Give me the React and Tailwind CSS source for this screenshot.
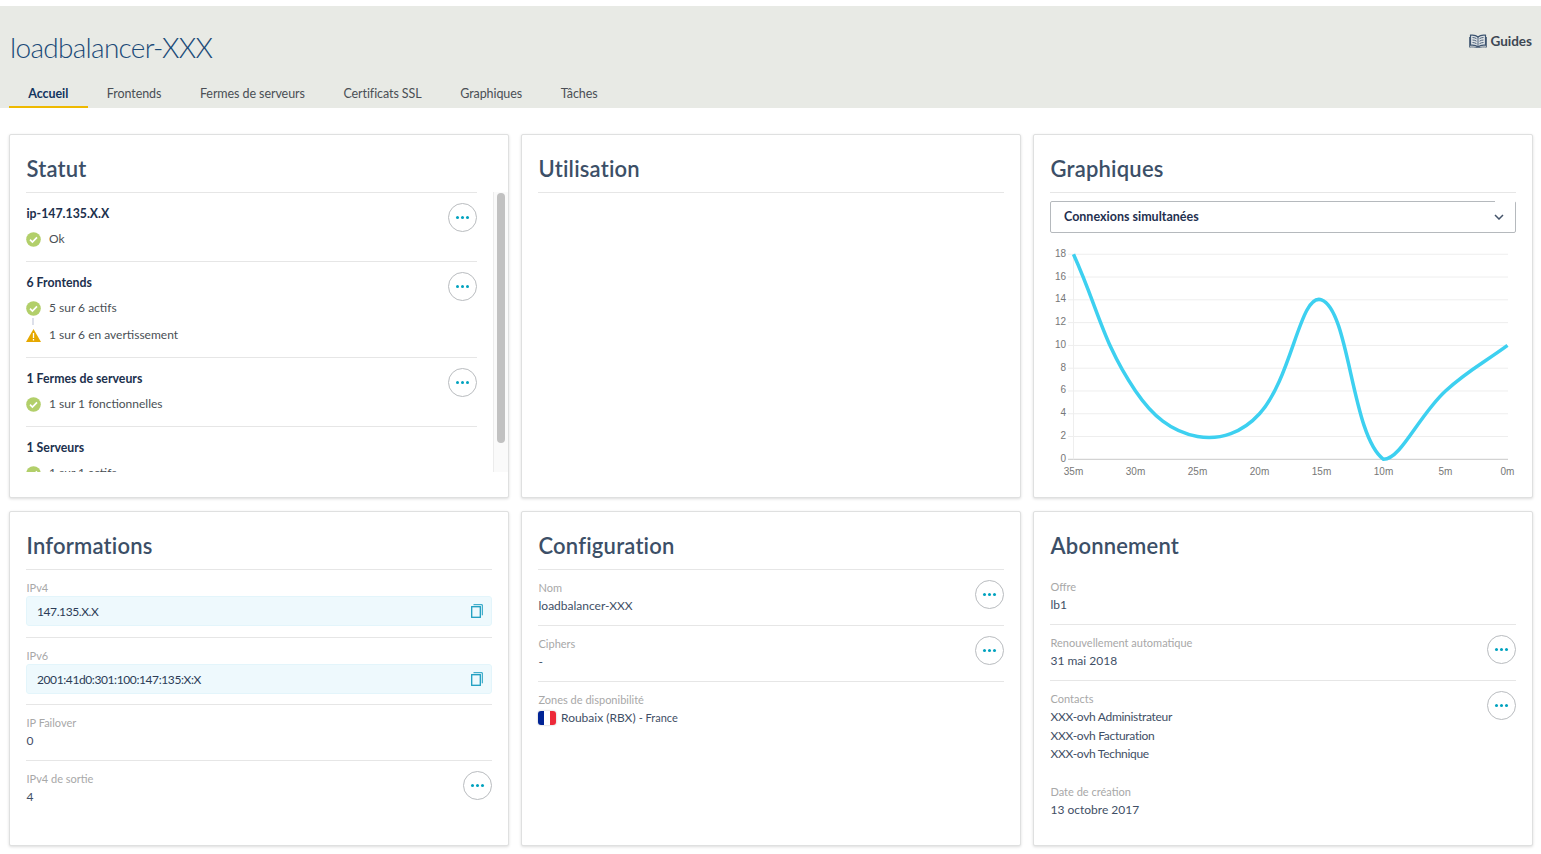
import React from "react"

const FONT = "font-['Lato','Noto_Sans',sans-serif]"

const TABS = ["Accueil", "Frontends", "Fermes de serveurs", "Certificats SSL", "Graphiques", "Tâches"]

// Valeurs du graphique, de 35m à 0m
const CHART_DATA = [18, 6, 2, 4, 14, 0, 6, 10]
const X_LABELS = ["35m", "30m", "25m", "20m", "15m", "10m", "5m", "0m"]
const Y_LABELS = [18, 16, 14, 12, 10, 8, 6, 4, 2, 0]

const chartX = (i) => 23.5 + i * 62
const chartY = (v) => 219.3 - v * 11.39

// Courbe de Bézier avec une tension de 0.4
const buildCurve = (values) => {
  const pts = values.map((v, i) => [chartX(i), chartY(v)])
  const dist = (a, b) => Math.hypot(a[0] - b[0], a[1] - b[1])
  const ctrl = pts.map((cur, i) => {
    const prev = pts[i - 1] || cur
    const next = pts[i + 1] || cur
    const d01 = dist(prev, cur)
    const d12 = dist(cur, next)
    const total = d01 + d12 || 1
    const fa = (0.4 * d01) / total
    const fb = (0.4 * d12) / total
    return {
      before: [cur[0] - fa * (next[0] - prev[0]), cur[1] - fa * (next[1] - prev[1])],
      after: [cur[0] + fb * (next[0] - prev[0]), cur[1] + fb * (next[1] - prev[1])],
    }
  })
  let d = `M${pts[0][0]} ${pts[0][1]}`
  for (let i = 1; i < pts.length; i++) {
    const c1 = ctrl[i - 1].after
    const c2 = ctrl[i].before
    d += ` C${c1[0].toFixed(1)} ${Math.min(c1[1], 219.3).toFixed(1)} ${c2[0].toFixed(1)} ${Math.min(c2[1], 219.3).toFixed(1)} ${pts[i][0]} ${pts[i][1]}`
  }
  return d
}

const Dots = () => (
  <button className="flex size-[29px] shrink-0 items-center justify-center gap-[2px] rounded-full border border-[#b9bcbf] bg-white">
    <span className="size-[3px] rounded-full bg-[#00a2bf]" />
    <span className="size-[3px] rounded-full bg-[#00a2bf]" />
    <span className="size-[3px] rounded-full bg-[#00a2bf]" />
  </button>
)

const CheckIcon = () => (
  <svg width="15" height="15" viewBox="0 0 15 15" className="shrink-0">
    <circle cx="7.5" cy="7.5" r="7.3" fill="#b2cf6a" />
    <path d="M4 7.700l2.400 2.300 4.600-4.700" fill="none" stroke="#fff" strokeWidth="1.700" />
  </svg>
)

const WarnIcon = () => (
  <svg width="15" height="13" viewBox="0 0 15 13" className="shrink-0">
    <path d="M7.5 0L15 13H0z" fill="#e6a800" />
    <path d="M7.5 4v5M7.5 10v1.5" stroke="#fff" strokeWidth="1.3" />
  </svg>
)

const CopyIcon = () => (
  <svg width="12" height="14" viewBox="0 0 12 14" className="shrink-0">
    <rect x="0.7" y="2.7" width="8.6" height="10.6" fill="none" stroke="#1b9dc0" strokeWidth="1.3" />
    <path d="M2.5 0.7h8.8v10.6" fill="none" stroke="#1b9dc0" strokeWidth="1" />
  </svg>
)

const BookIcon = () => (
  <svg width="18" height="14" viewBox="0 0 18 14" className="shrink-0">
    <path d="M9 3C7 1.200 4 .8 1.500 1.200v10C4 10.800 7 11.200 9 13c2-1.800 5-2.200 7.500-1.800v-10C14 .8 11 1.200 9 3z" fill="#dfe4e6" stroke="#3d5470" strokeWidth="1.200" />
    <path d="M9 3v10M3.500 3.500c1.500 0 3 .5 4 1.200M3.500 6c1.500 0 3 .5 4 1.200M3.500 8.500c1.500 0 3 .5 4 1.200M14.500 3.500c-1.500 0-3 .5-4 1.200M14.500 6c-1.500 0-3 .5-4 1.200M14.500 8.500c-1.500 0-3 .5-4 1.200" fill="none" stroke="#3d5470" strokeWidth="0.900" />
    <path d="M.5 3v10.200c2.500-.5 6-.2 8.500.8 2.500-1 6-1.300 8.500-.8V3" fill="none" stroke="#3d5470" strokeWidth="0.800" />
  </svg>
)

const Card = ({ title, children, noDivider }) => (
  <section className="flex min-h-0 flex-col overflow-hidden rounded-[2px] border border-[#dfe0e0] bg-white px-4 shadow-[0_1px_3px_rgba(0,0,0,0.14)]">
    <h2 className={`pb-[9px] pl-[0.5px] pt-5 text-[22px] font-semibold leading-7 tracking-[0.2px] text-[#3c4f67] ${noDivider ? "" : "border-b border-[#e6e6e6]"}`}>{title}</h2>
    {children}
  </section>
)

const Label = ({ children }) => <div className="text-[11px] leading-4 text-[#a8a8a8]">{children}</div>

const Value = ({ children }) => <div className="mt-px text-[12px] leading-[18px] text-[#3f4f66]">{children}</div>

const Field = ({ label, value, action, pb = "pb-[10px]", first }) => (
  <div className={`flex items-start justify-between pt-[10px] ${pb} ${first ? "" : "border-t border-[#e6e6e6]"}`}>
    <div className="pl-[0.5px]">
      <Label>{label}</Label>
      {value}
    </div>
    {action && <Dots />}
  </div>
)

const CopyField = ({ label, value, pb }) => (
  <div className={`border-t border-[#e6e6e6] pt-[10px] ${pb}`}>
    <div className="pl-[0.5px]">
      <Label>{label}</Label>
    </div>
    <div className="flex h-[30px] items-center justify-between rounded-[3px] border border-[#e3f5fb] bg-[#eef9fd] pl-[10px] pr-[8px] text-[12px] tracking-[-0.4px] text-[#2c3c57]">
      <span className="pt-px">{value}</span>
      <CopyIcon />
    </div>
  </div>
)

const StatusLine = ({ warn, children }) => (
  <div className="flex h-[18px] items-center gap-2 text-[12px] text-[#4a4f55]">
    {warn ? <WarnIcon /> : <CheckIcon />}
    <span>{children}</span>
  </div>
)

const StatusBlock = ({ name, action = true, children }) => (
  <div className="flex items-start justify-between border-t border-[#e6e6e6] pb-[13px] pt-[10px]">
    <div>
      <div className="mb-[6px] mt-px pl-[0.5px] text-[12.300px] font-bold leading-[20px] text-[#20304d]">{name}</div>
      {children}
    </div>
    {action && <Dots />}
  </div>
)

const Chart = () => (
  <svg width="466" height="240" viewBox="0 0 466 240" className="mt-[7px] block">
    {Y_LABELS.map((v) => (
      <g key={v}>
        <line x1="18" x2="458" y1={chartY(v)} y2={chartY(v)} stroke={v === 0 ? "#c9c9c9" : "#eeeeee"} />
        <text x="16" y={chartY(v) + 2.500} textAnchor="end" fontSize="10" fontFamily="Liberation Sans, sans-serif" fill="#777">{v}</text>
      </g>
    ))}
    <line x1="23.500" x2="23.500" y1="14" y2="219.300" stroke="#eeeeee" />
    {X_LABELS.map((label, i) => (
      <text key={label} x={chartX(i)} y="235" textAnchor="middle" fontSize="10" fontFamily="Liberation Sans, sans-serif" fill="#777">{label}</text>
    ))}
    <path d={buildCurve(CHART_DATA)} fill="none" stroke="#3dd0f0" strokeWidth="3.500" />
  </svg>
)

export default function App() {
  return (
    <div className={`${FONT} min-h-[854px] bg-white pt-[6px]`}>
      {/* En-tête */}
      <header className="h-[102px] bg-[#e8eae5] pl-[9px]">
        <div className="flex items-start justify-between pr-[9px]">
          <h1 className="pl-px pt-[22px] text-[28px] font-light leading-[38px] tracking-[-0.7px] text-[#1b4a78]">loadbalancer-XXX</h1>
          <a className="mt-[26px] flex items-center gap-[3px] text-[13.500px] font-bold leading-[18px] text-[#3d4753]">
            <BookIcon />
            Guides
          </a>
        </div>
        <nav className="mt-[10px] flex">
          {TABS.map((tab, i) => (
            <a key={tab} className={`h-[32px] px-[19.300px] pt-[9px] text-[12.500px] leading-[18px] tracking-[-0.08px] ${i === 0 ? "border-b-2 border-[#eeb900] font-bold text-[#12355f]" : "text-[#4a4f55]"}`}>
              {tab}
            </a>
          ))}
        </nav>
      </header>

      {/* Grille des cartes */}
      <main className="ml-[9px] mt-[26px] grid w-[1524px] grid-cols-3 grid-rows-[364px_335px] gap-x-3 gap-y-[13px]">
        <Card title="Statut" noDivider>
          <div className="-mr-4 flex h-[280px]">
            <div className="w-[451px] overflow-hidden">
              <StatusBlock name="ip-147.135.X.X">
                <StatusLine>Ok</StatusLine>
              </StatusBlock>
              <StatusBlock name="6 Frontends">
                <StatusLine>5 sur 6 actifs</StatusLine>
                <div className="ml-[6px] mt-px h-[7px] w-[2px] bg-[#dde0ea]" />
                <div className="mt-px">
                  <StatusLine warn>1 sur 6 en avertissement</StatusLine>
                </div>
              </StatusBlock>
              <StatusBlock name="1 Fermes de serveurs">
                <StatusLine>1 sur 1 fonctionnelles</StatusLine>
              </StatusBlock>
              <StatusBlock name="1 Serveurs" action={false}>
                <StatusLine>1 sur 1 actifs</StatusLine>
              </StatusBlock>
            </div>
            <div className="ml-4 w-[15px] border-l border-[#ececec] bg-[#fafafa] pl-[3px] pt-px">
              <div className="h-[250px] w-2 rounded-full bg-[#c1c1c1]" />
            </div>
          </div>
        </Card>

        <Card title="Utilisation" />

        <Card title="Graphiques">
          <div className="relative mt-2 flex h-[32px] items-center justify-between rounded-[2px] border border-[#b5b9bd] pl-[13px] pr-[11px] text-[12.500px] font-bold text-[#1f3050]">
            <span className="pt-px">Connexions simultanées</span>
            <svg width="10" height="6" viewBox="0 0 10 6">
              <path d="M1 1l4 4 4-4" fill="none" stroke="#44546a" strokeWidth="1.500" />
            </svg>
            <span className="absolute -top-px right-0 h-[2px] w-5 bg-white" />
          </div>
          <Chart />
        </Card>

        <Card title="Informations" noDivider>
          <CopyField label="IPv4" value="147.135.X.X" pb="pb-[11px]" />
          <CopyField label="IPv6" value="2001:41d0:301:100:147:135:X:X" pb="pb-[10px]" />
          <Field label="IP Failover" value={<Value>0</Value>} />
          <Field label="IPv4 de sortie" value={<Value>4</Value>} action />
        </Card>

        <Card title="Configuration">
          <Field first label="Nom" value={<Value>loadbalancer-XXX</Value>} action />
          <Field label="Ciphers" value={<Value>-</Value>} action />
          <Field
            label="Zones de disponibilité"
            value={
              <div className="mt-px flex items-center gap-[5px] text-[12px] leading-[18px] text-[#3f4f66]">
                <span className="-ml-[0.5px] flex h-[14px] w-[18px] overflow-hidden rounded-[3px] shadow-[0_0_2px_rgba(0,0,0,0.3)]">
                  <span className="flex-1 bg-[#002395]" />
                  <span className="flex-1 bg-white" />
                  <span className="flex-1 bg-[#ed2939]" />
                </span>
                <span>Roubaix (RBX) <span className="text-[11px]">- France</span></span>
              </div>
            }
          />
        </Card>

        <Card title="Abonnement" noDivider>
          <Field first label="Offre" value={<Value>lb1</Value>} />
          <Field label="Renouvellement automatique" value={<Value>31 mai 2018</Value>} action />
          <Field
            label="Contacts"
            action
            pb="pb-0"
            value={
              <div className="mt-px text-[12px] leading-[18.500px] tracking-[-0.3px] text-[#3f4f66]">
                <div>XXX-ovh Administrateur</div>
                <div>XXX-ovh Facturation</div>
                <div>XXX-ovh Technique</div>
              </div>
            }
          />
          <div className="pl-[0.5px] pt-5">
            <Label>Date de création</Label>
            <Value>13 octobre 2017</Value>
          </div>
        </Card>
      </main>
    </div>
  )
}
